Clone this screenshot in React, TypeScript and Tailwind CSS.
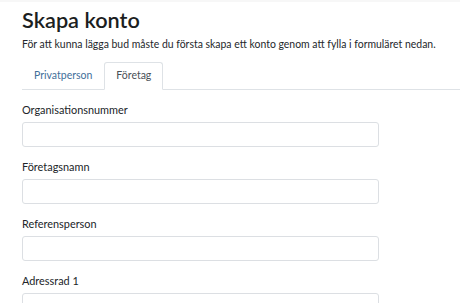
import React from "react";

const fields = ["Organisationsnummer", "Företagsnamn", "Referensperson", "Adressrad 1"];

export default function App() {
  return (
    <div
      className="w-[460px] h-[303px] overflow-hidden bg-white text-[#212529]"
      style={{ fontFamily: 'Lato, "Noto Sans", sans-serif' }}
    >
      <div className="h-[2px] bg-[#f7f7f7]" />
      <div className="pl-[22px]">
        <h1 className="mt-[5px] text-[21.7px] leading-[26px] font-semibold text-[#1b1e21]">Skapa konto</h1>
        <p className="mt-[4px] text-[10.45px] leading-[14px] text-[#24272b] whitespace-nowrap">
          För att kunna lägga bud måste du första skapa ett konto genom att fylla i formuläret nedan.
        </p>
        <div className="mt-[11px] flex border-b border-[#dee2e6] h-[28px]">
          <div className="px-[11px] flex items-center text-[10.5px] text-[#3f6f9a] border border-transparent mb-[-1px]">
            Privatperson
          </div>
          <div className="px-[11px] flex items-center text-[10.5px] text-[#495057] bg-white border border-[#dee2e6] border-b-white rounded-t-[3px] mb-[-1px]">
            Företag
          </div>
        </div>
        <div className="pt-[13px] flex flex-col">
          {fields.map((f) => (
            <div key={f} className="flex flex-col h-[57px]">
              <label className="text-[10.9px] leading-[14px] text-[#212529]">{f}</label>
              <div className="mt-[5px] w-[357px] h-[25px] border border-[#dcdfe3] rounded-[3px] bg-white" />
            </div>
          ))}
        </div>
      </div>
    </div>
  );
}
